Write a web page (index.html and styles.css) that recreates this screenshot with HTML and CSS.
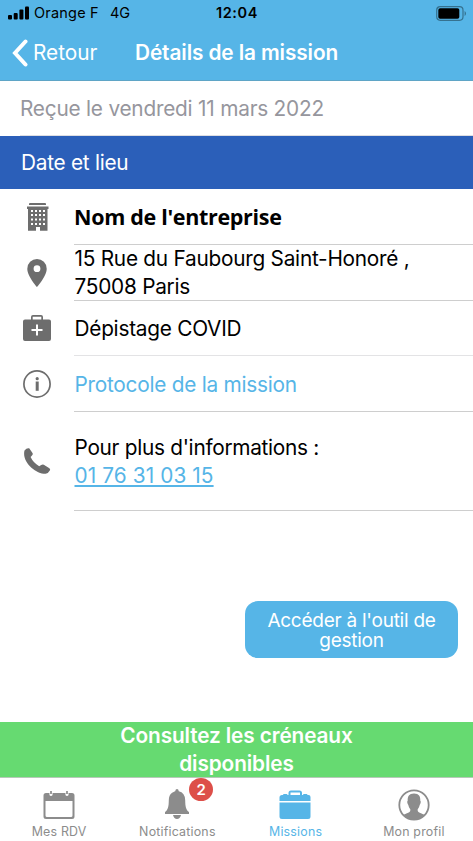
FILE: index.html
```html
<!DOCTYPE html>
<html lang="fr">
<head>
<meta charset="utf-8">
<title>Détails de la mission</title>
<link rel="stylesheet" href="styles.css">
</head>
<body>
<header class="header">
  <div class="status">
    <svg class="signal" width="22" height="14" viewBox="0 0 22 14"><rect x="0" y="9" width="4" height="4.500" rx="1"/><rect x="5.700" y="7" width="4" height="6.500" rx="1"/><rect x="11.400" y="3.500" width="4" height="10" rx="1"/><rect x="17" y=".5" width="4" height="13" rx="1"/></svg>
    <span class="carrier">Orange F</span>
    <span class="network">4G</span>
    <time class="clock">12:04</time>
    <svg class="battery" width="31" height="15" viewBox="0 0 31 15"><rect x=".7" y=".7" width="26.300" height="13.600" rx="3.500" fill="none" stroke="#35718f" stroke-width="1.200"/><rect x="2.300" y="2.300" width="21" height="10.400" rx="1.800"/><path d="M28.600 5v5q1.400-.6 1.400-2.500T28.600 5z" fill="#35718f"/></svg>
  </div>
  <div class="navbar">
    <a class="back"><svg width="16" height="28" viewBox="0 0 16 28"><path d="M13.500 2.500 3 14l10.500 11.500" fill="none" stroke="#fff" stroke-width="4" stroke-linecap="round" stroke-linejoin="miter"/></svg><span class="back-label">Retour</span></a>
    <h1 class="title">Détails de la mission</h1>
  </div>
</header>
<main class="content">
  <p class="received"><span class="received-text">Reçue le vendredi 11 mars 2022</span></p>
  <h2 class="section">Date et lieu</h2>
  <ul class="list">
    <li class="row row-company">
      <span class="icon"><svg width="22" height="28" viewBox="0 0 22 28"><path fill="#6d6d6d" fill-rule="evenodd" d="M3 0h15q1 0 1 1v1H2V1q0-1 1-1zM0 3.500h21.500V6h-1v21.700H13V24H9v3.700H1V6H0zM4 7v2h2V7zm4 0v2h2V7zm4 0v2h2V7zm4 0v2h2V7zM4 11v2h2v-2zm4 0v2h2v-2zm4 0v2h2v-2zm4 0v2h2v-2zM4 15.500v2h2v-2zm4 0v2h2v-2zm4 0v2h2v-2zm4 0v2h2v-2zM4 20v2h2v-2zm4 0v2h2v-2zm4 0v2h2v-2zm4 0v2h2v-2z"/></svg></span>
      <div class="cell company">Nom de l'entreprise</div>
    </li>
    <li class="row row-address">
      <span class="icon"><svg width="20" height="28" viewBox="0 0 20 28"><path fill="#6d6d6d" fill-rule="evenodd" d="M10 0a9.700 9.700 0 0 0-9.700 9.700C.3 17 10 28 10 28s9.700-11 9.700-18.300A9.700 9.700 0 0 0 10 0zm0 6.300a3.400 3.400 0 1 1 0 6.800 3.400 3.400 0 0 1 0-6.800z"/></svg></span>
      <div class="cell"><span class="street">15 Rue du Faubourg Saint-Honoré ,</span><br><span class="city">75008 Paris</span></div>
    </li>
    <li class="row row-covid">
      <span class="icon"><svg width="28" height="27" viewBox="0 0 28 27"><path fill="#6d6d6d" fill-rule="evenodd" d="M10 0h8q2 0 2 2v2.500h6q2 0 2 2V24q0 2-2 2H2q-2 0-2-2V6.500q0-2 2-2h6V2q0-2 2-2zm-.3 1.800v2.700h8.600V1.800z"/><path d="M14 9.500v11M8.500 15h11" stroke="#fff" stroke-width="2"/></svg></span>
      <div class="cell covid">Dépistage COVID</div>
    </li>
    <li class="row row-protocol">
      <span class="icon"><svg width="28" height="28" viewBox="0 0 28 28"><circle cx="14" cy="14" r="13.100" fill="none" stroke="#6d6d6d" stroke-width="1.700"/><path d="M14.200 11.500v9.300" stroke="#6d6d6d" stroke-width="3"/><circle cx="14.200" cy="8.700" r="1.600" fill="#6d6d6d"/></svg></span>
      <div class="cell protocol">Protocole de la mission</div>
    </li>
    <li class="row row-phone">
      <span class="icon"><svg width="28" height="28" viewBox="0 0 28 28"><path fill="#6d6d6d" d="M1.500 3.500Q3.800.6 6.200 1.300L9.500 6q.7 1.300-.5 2.500L7.600 10q2.500 5.500 8.600 9.300l2-1.200q1.300-.8 2.600-.3l5.200 3.200q1.700 1 .8 2.500-1.600 3-4.200 3.300C13 27-1.500 15 1.500 3.500z"/></svg></span>
      <div class="cell"><span class="more">Pour plus d'informations :</span><br><a class="phone">01 76 31 03 15</a></div>
    </li>
  </ul>
  <a class="button">Accéder à l'outil de<br>gestion</a>
</main>
<footer>
  <div class="banner">Consultez les créneaux<br>disponibles</div>
  <nav class="tabs">
    <a class="tab"><svg width="32" height="30" viewBox="0 0 32 30"><path fill="#8c8c8c" fill-rule="evenodd" d="M3 3h3.500Q6 6 8 6t1.500-3h13q-.5 3 1.500 3t1.500-3H29q2.500 0 2.500 2.500v21Q31.500 29 29 29H3Q.5 29 .5 26.500v-21Q.5 3 3 3zm-.5 8v14.500q0 1.500 1.500 1.500h24q1.500 0 1.500-1.500V11z"/><path d="M8 1v3M24 1v3" stroke="#8c8c8c" stroke-width="1.700"/></svg><span>Mes RDV</span></a>
    <a class="tab"><svg width="26" height="31" viewBox="0 0 26 31"><path fill="#8c8c8c" d="M13 0q1.500 0 1.800 2.200 6.200 1.300 6.400 9c.1 6.800.8 9.500 3.800 11.800V25H1v-2c3-2.300 3.700-5 3.800-11.800.2-7.700 4.900-8.200 6.400-9Q11.500 0 13 0zM9 26h8q-1 4-4 4t-4-4z"/></svg><span class="badge">2</span><span class="tab-notif">Notifications</span></a>
    <a class="tab tab-active"><svg width="32" height="30" viewBox="0 0 32 30"><path fill="#56b5e7" fill-rule="evenodd" d="M3 5h1q0-1 1-1h2.500q1 0 1 1h1V3Q9.500.5 12 .5h8.500q2.500 0 2.500 2.500v2h1q0-1 1-1h2.500q1 0 1 1h1q2 0 2 2v4H.5V7.500Q.5 5 3 5zm8.500 0H21V2.500h-9.500zM.5 12.500h31v14Q31.500 29 29 29H3Q.5 29 .5 26.500z"/></svg><span>Missions</span></a>
    <a class="tab"><svg width="32" height="32" viewBox="0 0 32 32"><circle cx="16" cy="16" r="14.700" fill="none" stroke="#8c8c8c" stroke-width="1.800"/><path fill="#8c8c8c" d="M16 4.500c5 0 6.500 3 6.300 7.200.8.300.5 3-.6 4.300-.5 2.500-1.400 3.500-2 4.200-.6 3.200 2.500 3.600 7 5.600Q22 31 16 31T5.300 25.800c4.500-2 7.600-2.400 7-5.600-.6-.7-1.500-1.700-2-4.200-1.100-1.300-1.400-4-.6-4.300C9.500 7.500 11 4.500 16 4.500z"/></svg><span>Mon profil</span></a>
  </nav>
</footer>
</body>
</html>
```
FILE: styles.css
```css
* { box-sizing: border-box; }
body { margin: 0; width: 473px; height: 841px; display: flex; flex-direction: column; background: #fff; color: #000; font: 20.8px/28px Inter, "Liberation Sans", sans-serif; overflow: hidden; }
h1, h2, p, ul { margin: 0; padding: 0; font-weight: 400; font-size: inherit; }
svg { display: block; flex: none; }
span, a, h1, h2, time, .cell { white-space: nowrap; }
.header { height: 81px; flex: none; background: #56b5e7; border-bottom: 1px solid #5fa5c6; }
.status { height: 26px; display: grid; grid-template-columns: 26px 76px 106px 220px 1fr; padding-left: 8px; align-items: center; font-size: 14.500px; line-height: 26px; }
.signal { margin-top: -1px; }
.carrier { letter-spacing: .2px; }
.clock { font-weight: 600; letter-spacing: .6px; }
.navbar { height: 54px; display: grid; grid-template-columns: 123px 1fr; padding-left: 12px; align-items: center; color: #fff; }
.back { display: flex; align-items: center; gap: 5px; }
.title { font-weight: 600; letter-spacing: -.1px; }
.received { height: 55px; margin-left: 20px; line-height: 55px; letter-spacing: -.22px; color: #96969d; border-bottom: 1px solid #dedee2; }
.section { height: 53px; padding-left: 21px; line-height: 53px; letter-spacing: -.27px; background: #2b5fb9; color: #fff; }
.list { list-style: none; }
.row { display: flex; }
.icon { width: 74px; flex: none; display: flex; justify-content: center; align-items: center; }
.cell { flex: 1; padding-left: .5px; letter-spacing: -.25px; border-bottom: 1px solid #cecece; }
.row-company { height: 56px; }
.row-company .icon { padding-left: 1px; }
.row-company .cell { padding: 14px 0 0; }
.company { font-family: "Open Sans", "Noto Sans", sans-serif; font-weight: 700; font-size: 21.500px; letter-spacing: -.32px; }
.row-address { height: 56px; }
.row-covid { height: 55px; }
.row-covid .cell { padding-top: 14px; border-color: #e3e3e5; }
.row-protocol { height: 56px; }
.row-protocol .cell { padding-top: 15px; }
.protocol { color: #56b5e7; }
.row-phone { height: 99px; }
.row-phone .icon { padding-bottom: 2px; }
.row-phone .cell { padding-top: 22px; }
.more { letter-spacing: -.28px; }
.phone { letter-spacing: .1px; color: #56b5e7; text-decoration: underline; text-decoration-thickness: 1.500px; text-underline-offset: 2px; }
.button { display: block; width: 213px; height: 57px; margin: 90px 15px 0 auto; padding-top: 10px; text-align: center; color: #fff; background: #56b5e7; border-radius: 13px; font-size: 19px; line-height: 20px; letter-spacing: -.25px; }
.content { flex: 1; }
.banner { height: 56px; background: #66da71; border-bottom: 1px solid #b8c8b9; color: #fff; text-align: center; font-weight: 600; letter-spacing: -.12px; }
.tabs { height: 63px; display: grid; grid-template-columns: repeat(4, 1fr); color: #8c8c8c; font-size: 12.400px; line-height: 16px; letter-spacing: .2px; }
.tab { position: relative; display: grid; grid-template-rows: 33px 21px; justify-items: center; align-items: center; padding-top: 10px; align-content: start; }
.tab-active { color: #56b5e7; }
.tab-active svg { margin-right: 1px; }
.badge { position: absolute; left: 71px; top: 0; width: 24px; height: 23px; border-radius: 50%; background: #dd4f49; color: #fff; font-size: 15px; font-weight: 600; line-height: 23px; text-align: center; }
```
